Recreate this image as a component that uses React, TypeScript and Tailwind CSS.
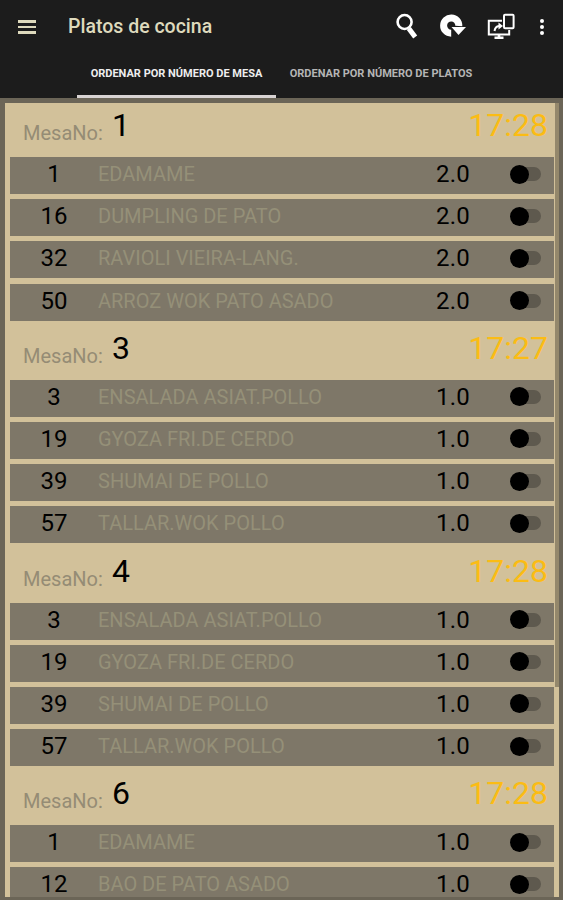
type Dish = {
  id: number
  name: string
  qty: string
}

type Table = {
  number: number
  time: string
  dishes: Dish[]
}

const mixedDishes: Dish[] = [
  { id: 3, name: "ENSALADA ASIAT.POLLO", qty: "1.0" },
  { id: 19, name: "GYOZA FRI.DE CERDO", qty: "1.0" },
  { id: 39, name: "SHUMAI DE POLLO", qty: "1.0" },
  { id: 57, name: "TALLAR.WOK POLLO", qty: "1.0" },
]

const tables: Table[] = [
  {
    number: 1,
    time: "17:28",
    dishes: [
      { id: 1, name: "EDAMAME", qty: "2.0" },
      { id: 16, name: "DUMPLING DE PATO", qty: "2.0" },
      { id: 32, name: "RAVIOLI VIEIRA-LANG.", qty: "2.0" },
      { id: 50, name: "ARROZ WOK PATO ASADO", qty: "2.0" },
    ],
  },
  { number: 3, time: "17:27", dishes: mixedDishes },
  { number: 4, time: "17:28", dishes: mixedDishes },
  {
    number: 6,
    time: "17:28",
    dishes: [
      { id: 1, name: "EDAMAME", qty: "1.0" },
      { id: 12, name: "BAO DE PATO ASADO", qty: "1.0" },
    ],
  },
]

function SearchIcon() {
  return (
    <svg className="h-[28px] w-[24px]" viewBox="0 0 24 28" fill="none" stroke="#fff">
      <circle cx="9.6" cy="9" r="7" strokeWidth="2.6" />
      <path d="M13.8 15.6 20.2 24" strokeWidth="5" />
    </svg>
  )
}

function RefreshIcon() {
  return (
    <svg className="h-[28px] w-[28px]" viewBox="0 0 28 28">
      <path d="M13.2 20.2A7.6 7.6 0 1 1 20.8 13" fill="none" stroke="#fff" strokeWidth="7" />
      <path d="M13.5 14H28L20.5 22Z" fill="#fff" />
    </svg>
  )
}

function CastIcon() {
  return (
    <svg className="h-[28px] w-[28px]" viewBox="0 0 28 28" fill="none" stroke="#fff" strokeWidth="2">
      <path d="M15 7.7H1.8V21.5H22.2V17" />
      <rect x="17" y="1.7" width="9.6" height="13.6" rx="1" />
      <path d="M7.5 24.8H16.5M12 21V25" strokeWidth="2.6" />
      <path d="M7.5 18C8 14.5 10 13.2 12 13" />
      <path d="M11.5 9.6 16 13 11.5 16.4Z" fill="#fff" stroke="none" />
    </svg>
  )
}

function Switch() {
  return (
    <div className="flex w-[31px] items-center">
      <div className="z-10 size-[19px] rounded-full bg-black" />
      <div className="-ml-[10px] h-[14px] w-[22px] rounded-full bg-[#5e594e]" />
    </div>
  )
}

function DishRow({ dish }: { dish: Dish }) {
  return (
    <div className="mb-[5.2px] flex h-[37px] items-center bg-[#7e7768] pb-[3px]">
      <span className="w-[88px] text-center text-[24px] text-black">{dish.id}</span>
      <span className="w-[332px] pl-[-2px] text-[20px] text-[#959078]">{dish.name}</span>
      <span className="w-[80px] pl-[6px] text-[24px] tracking-[0.2px] text-black">{dish.qty}</span>
      <Switch />
    </div>
  )
}

function TableGroup({ table }: { table: Table }) {
  return (
    <section>
      <div className="flex h-[54px] items-start leading-none">
        <span className="ml-[13px] w-[89px] pt-[20px] text-[20px] text-[#958c75]">MesaNo:</span>
        <span className="pt-[6px] text-[32px] text-black">{table.number}</span>
        <span className="mr-[6px] ml-auto pt-[6px] text-[32px] text-[#fbbc14]">{table.time}</span>
      </div>
      {table.dishes.map((dish) => (
        <DishRow key={dish.id} dish={dish} />
      ))}
    </section>
  )
}

export default function App() {
  return (
    <div className="flex h-[900px] w-[563px] flex-col overflow-hidden bg-[#6b6557] font-[Roboto,sans-serif]">
      <header className="h-[98px] shrink-0 bg-[#1c1c1c]">
        <div className="flex h-[54px] items-center">
          <div className="ml-[18px] flex w-[18px] flex-col gap-[3px]">
            <div className="h-[2.5px] bg-[#dedabd]" />
            <div className="h-[2.5px] bg-[#dedabd]" />
            <div className="h-[2.5px] bg-[#dedabd]" />
          </div>
          <h1 className="ml-[32px] text-[19.5px] font-medium text-[#dedabd]">Platos de cocina</h1>
          <div className="ml-auto flex items-center">
            <SearchIcon />
            <div className="ml-[19px]">
              <RefreshIcon />
            </div>
            <div className="ml-[21px]">
              <CastIcon />
            </div>
            <div className="mr-[19px] ml-[25px] flex flex-col gap-[2px]">
              <div className="size-[4px] rounded-full bg-white" />
              <div className="size-[4px] rounded-full bg-white" />
              <div className="size-[4px] rounded-full bg-white" />
            </div>
          </div>
        </div>
        <nav className="ml-[77px] flex h-[44px] text-[11px] font-bold">
          <div className="flex w-[199px] items-center justify-center border-b-[3px] border-[#d8d3d3] text-[#eeeeee]">
            ORDENAR POR NÚMERO DE MESA
          </div>
          <div className="flex w-[210px] items-center justify-center border-b-[3px] border-transparent text-[#b5b5b5]">
            ORDENAR POR NÚMERO DE PLATOS
          </div>
        </nav>
      </header>

      <main className="mt-[5px] mr-[4px] mb-[3px] ml-[5px] flex min-h-0 flex-1 overflow-hidden bg-[#d2c19a]">
        <div className="ml-[5px] w-[544px]">
          {tables.map((table) => (
            <TableGroup key={table.number} table={table} />
          ))}
        </div>
        <div className="ml-[1px] h-[584px] w-[4px] bg-[#94886c]" />
      </main>
    </div>
  )
}
